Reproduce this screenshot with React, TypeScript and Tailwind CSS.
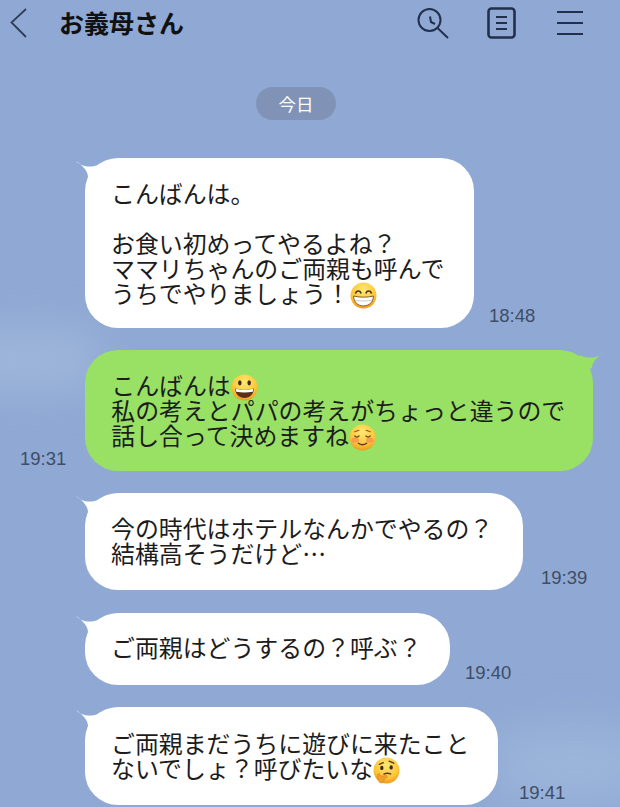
import React from "react";

const jp = "font-['Noto_Sans_CJK_JP','Noto_Sans',sans-serif]";
const emoji = "inline-block w-[27px] h-[27px] align-[-6px]";

const Face = ({ id }: { id: string }) => (
  <>
    <defs>
      <radialGradient id={id} cx="50%" cy="30%" r="75%">
        <stop offset="0%" stopColor="#ffe873" />
        <stop offset="65%" stopColor="#fcc536" />
        <stop offset="100%" stopColor="#ec8e1e" />
      </radialGradient>
    </defs>
    <circle cx="13" cy="13" r="12.5" fill={`url(#${id})`} />
  </>
);

// smiling eyes, wide teeth
const Grin = () => (
  <svg viewBox="0 0 26 26" className={emoji}>
    <Face id="grin" />
    <path d="M5.5 10.5c1-2.5 4-2.500 5 0M15.500 10.500c1-2.500 4-2.500 5 0" fill="none" stroke="#4a3320" strokeWidth="1.500" strokeLinecap="round" />
    <path d="M3.500 13.500c6 1.500 13 1.500 19 0 0 6-4 9.500-9.500 9.500s-9.500-3.500-9.500-9.500z" fill="#fff" stroke="#6b4420" strokeWidth=".8" />
    <path d="M4.500 17.500c5 1 12 1 17 0" fill="none" stroke="#b5b5b5" strokeWidth=".7" />
  </svg>
);

// round eyes, open mouth
const Happy = () => (
  <svg viewBox="0 0 26 26" className={emoji}>
    <Face id="happy" />
    <ellipse cx="8.500" cy="8.500" rx="1.700" ry="2.500" fill="#3d2a18" />
    <ellipse cx="17.500" cy="8.500" rx="1.700" ry="2.500" fill="#3d2a18" />
    <path d="M4 14c6 1.300 12 1.300 18 0 0 5.500-4 9-9 9s-9-3.500-9-9z" fill="#5b2e16" />
    <path d="M4.500 14.100c5.500 1.200 11.500 1.200 17 0l-.5 3c-5 1-11 1-16 0z" fill="#fff" />
  </svg>
);

const Smile = () => (
  <svg viewBox="0 0 26 26" className={emoji}>
    <Face id="smile" />
    <ellipse cx="6" cy="15.500" rx="3.700" ry="2.600" fill="#f5845c" opacity=".65" />
    <ellipse cx="20" cy="15.500" rx="3.700" ry="2.600" fill="#f5845c" opacity=".65" />
    <path d="M5.500 7.500l4-1.500M20.500 7.500l-4-1.500" stroke="#8a5a28" strokeWidth="1" strokeLinecap="round" />
    <path d="M5.500 11.500c1.200 1.500 3 1.500 4.200 0M16.300 11.500c1.200 1.500 3 1.500 4.200 0" fill="none" stroke="#5a3a20" strokeWidth="1.200" strokeLinecap="round" />
    <path d="M9 18.500c2.500 1.800 5.500 1.800 8 0" fill="none" stroke="#5a3a20" strokeWidth="1.300" strokeLinecap="round" />
  </svg>
);

const Think = () => (
  <svg viewBox="0 0 26 26" className={emoji}>
    <Face id="think" />
    <path d="M6 7l4-1.500M15.500 4l4.500 2" stroke="#5a3a20" strokeWidth="1.300" strokeLinecap="round" />
    <ellipse cx="8.500" cy="10.500" rx="1.600" ry="2.100" fill="#3d2a18" />
    <ellipse cx="17.500" cy="10" rx="1.600" ry="2.100" fill="#3d2a18" />
    <path d="M10.500 16.500c2-1 4.500-1 6.500-.2" fill="none" stroke="#5a3a20" strokeWidth="1.300" strokeLinecap="round" />
    <path d="M4.500 20.500c-1-2.500 0-4.500 1.500-4.500l2 2.500 5-.7c1.300.2 1 1.700 0 2l-2 .7c0 2.500-1 4.500-3 4.500-2 0-3-2-3.500-4.500z" fill="#f0a02a" stroke="#d5861a" strokeWidth=".6" />
  </svg>
);

const Bubble = ({ width, green, right, children }: { width: string; green?: boolean; right?: boolean; children: React.ReactNode }) => (
  <div className={`relative ${width} ${green ? "bg-[#98e165]" : "bg-white"} rounded-[33px] pl-[26px] pr-[16px]`}>
    <svg
      viewBox="0 0 32 24"
      className={`absolute w-[32px] h-[24px] ${right ? "top-[2px] right-[-11px] scale-x-[-1]" : "top-[3px] left-[-9px]"}`}
    >
      <path d="M0 0C5 5 14 8 24 3L30 22 12 16C12 10 6 4 0 0z" fill={green ? "#98e165" : "#ffffff"} />
    </svg>
    {children}
  </div>
);

const Line = ({ children }: { children?: React.ReactNode }) => (
  <div className="h-[25px] leading-[25px] whitespace-nowrap">{children}</div>
);

const Time = ({ children }: { children: React.ReactNode }) => (
  <span className="mb-[2px] text-[18.5px] leading-[20px] text-[#3f4d66] font-['Liberation_Sans',sans-serif]">{children}</span>
);

export default function App() {
  return (
    <div className={`relative w-[620px] h-[807px] overflow-hidden bg-[#8fa9d4] text-[#1c1c1c] ${jp}`}>
      {/* clouds */}
      <div className="absolute left-[-50px] top-[330px] w-[150px] h-[60px] rounded-full bg-[#9fb6da] blur-[22px]" />
      <div className="absolute left-[490px] top-[730px] w-[170px] h-[70px] rounded-full bg-[#9db5da] blur-[24px]" />

      <header className="relative h-[46px] flex items-center">
        <svg viewBox="0 0 20 32" className="ml-[9px] w-[20px] h-[32px]" fill="none" stroke="#2f3e5a" strokeWidth="1.800">
          <path d="M17 2 2.500 15.500 17 30" />
        </svg>
        <h1 className="ml-[30px] text-[25px] font-bold text-[#111]">お義母さん</h1>
        <div className="ml-auto mr-[36px] flex items-center text-[#232f4c]">
          <svg viewBox="0 0 32 32" className="w-[32px] h-[32px]" fill="none" stroke="currentColor">
            <circle cx="12.500" cy="13" r="11" strokeWidth="2" />
            <path d="M13 9.500 14 15l4 2" strokeWidth="2" />
            <path d="M20.500 21 31 31" strokeWidth="2" />
          </svg>
          <svg viewBox="0 0 29 32" className="ml-[38px] w-[29px] h-[32px]" fill="none" stroke="currentColor">
            <rect x="1.500" y="1.500" width="26" height="29" rx="3" strokeWidth="2.600" />
            <path d="M9 10h11M9 16h11M9 22h11" strokeWidth="2.200" />
          </svg>
          <svg viewBox="0 0 28 24" className="ml-[40px] w-[28px] h-[24px]" fill="none" stroke="currentColor" strokeWidth="2">
            <path d="M1 1h26M1 12h26M1 23h26" />
          </svg>
        </div>
      </header>

      <div className="relative flex justify-center mt-[41px] pr-[28px]">
        <span className="w-[80px] h-[33px] rounded-full bg-[#8093b6] text-white text-[17.5px] leading-[33px] text-center">今日</span>
      </div>

      <main className="relative flex flex-col gap-[22px] mt-[38px] text-[23.9px]">
        <div className="flex items-end ml-[85px] gap-[15px]">
          <Bubble width="w-[389px] h-[170px] pt-[22px]">
            <Line>こんばんは。</Line>
            <Line />
            <Line>お食い初めってやるよね？</Line>
            <Line>ママリちゃんのご両親も呼んで</Line>
            <Line>うちでやりましょう！<Grin /></Line>
          </Bubble>
          <Time>18:48</Time>
        </div>

        <div className="flex items-end ml-[20px] gap-[19px]">
          <Time>19:31</Time>
          <Bubble width="w-[508px] h-[121px] pt-[22px]" green right>
            <Line>こんばんは<Happy /></Line>
            <Line>私の考えとパパの考えがちょっと違うので</Line>
            <Line>話し合って決めますね<Smile /></Line>
          </Bubble>
        </div>

        <div className="flex items-end ml-[85px] gap-[18px]">
          <Bubble width="w-[438px] h-[97px] pt-[22px]">
            <Line>今の時代はホテルなんかでやるの？</Line>
            <Line>結構高そうだけど…</Line>
          </Bubble>
          <Time>19:39</Time>
        </div>

        <div className="flex items-end ml-[85px] gap-[15px] mt-px">
          <Bubble width="w-[365px] h-[72px] pt-[21px]">
            <Line>ご両親はどうするの？呼ぶ？</Line>
          </Bubble>
          <Time>19:40</Time>
        </div>

        <div className="flex items-end ml-[85px] gap-[21px]">
          <Bubble width="w-[413px] h-[98px] pt-[23px]">
            <Line>ご両親まだうちに遊びに来たこと</Line>
            <Line>ないでしょ？呼びたいな<Think /></Line>
          </Bubble>
          <Time>19:41</Time>
        </div>
      </main>
    </div>
  );
}
